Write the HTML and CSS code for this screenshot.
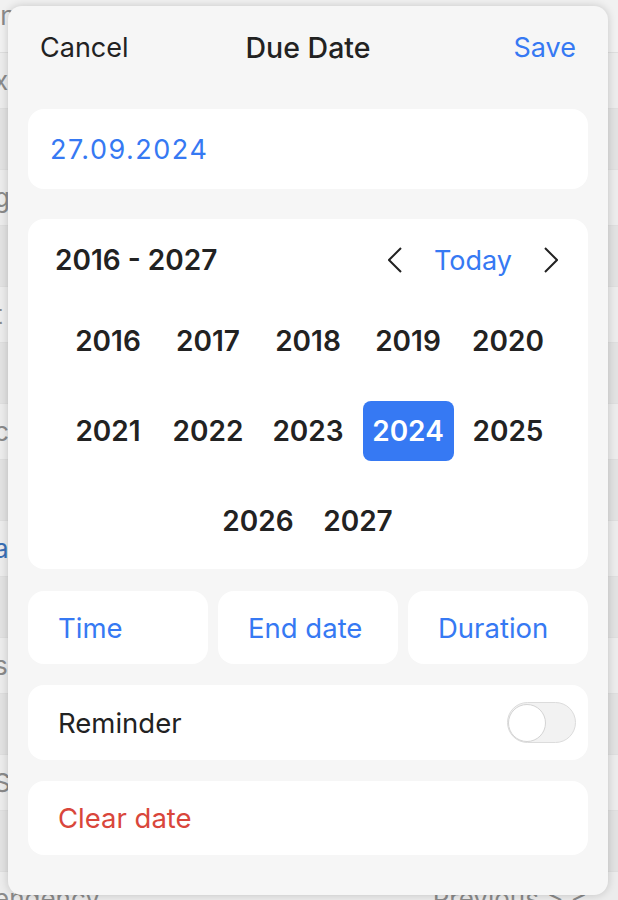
FILE: index.html
```html
<!DOCTYPE html>
<html>

<head>
    <title>Due Date</title>
    <meta charset="utf-8">
    <meta name="viewport" content="width=device-width">
    <link rel="stylesheet" href="styles.css">
</head>

<body>
    <!-- page behind the sheet -->
    <div id="backdrop">
        <div class="bg-row bg-top"><span>in</span></div>
        <div class="bg-row"><span>x</span></div>
        <div class="bg-row bg-dark"></div>
        <div class="bg-row"><span>g</span></div>
        <div class="bg-row bg-dark"></div>
        <div class="bg-row"><span>t</span></div>
        <div class="bg-row bg-dark"></div>
        <div class="bg-row"><span>c</span></div>
        <div class="bg-row bg-dark"></div>
        <div class="bg-row"><span class="bg-link">a</span></div>
        <div class="bg-row bg-dark"></div>
        <div class="bg-row"><span>s</span></div>
        <div class="bg-row bg-dark"></div>
        <div class="bg-row"><span>S</span></div>
        <div class="bg-row bg-dark"></div>
        <div class="bg-row bg-last"><span>endency</span><span>Previous &gt; &lt;</span></div>
    </div>

    <div id="sheet">
        <header>
            <div class="hdr-btn">Cancel</div>
            <div class="hdr-title">Due Date</div>
            <div class="hdr-btn hdr-right blue">Save</div>
        </header>

        <div class="card date-field">27.09.2024</div>

        <div class="card calendar">
            <div class="cal-head">
                <div class="cal-range">2016 - 2027</div>
                <div class="cal-nav">
                    <svg width="14" height="26" viewBox="0 0 14 26"><path d="M13 1 L1 13 L13 25" fill="none" stroke="#222" stroke-width="2"/></svg>
                    <span class="blue">Today</span>
                    <svg width="14" height="26" viewBox="0 0 14 26"><path d="M1 1 L13 13 L1 25" fill="none" stroke="#222" stroke-width="2"/></svg>
                </div>
            </div>
            <div class="years">
                <div class="year">2016</div>
                <div class="year">2017</div>
                <div class="year">2018</div>
                <div class="year">2019</div>
                <div class="year">2020</div>
                <div class="year">2021</div>
                <div class="year">2022</div>
                <div class="year">2023</div>
                <div class="year selected">2024</div>
                <div class="year">2025</div>
                <div class="year">2026</div>
                <div class="year">2027</div>
            </div>
        </div>

        <div class="options">
            <div class="card option blue">Time</div>
            <div class="card option blue">End date</div>
            <div class="card option blue">Duration</div>
        </div>

        <div class="card row reminder">
            <span>Reminder</span>
            <div class="toggle"><div class="knob"></div></div>
        </div>

        <div class="card row clear">Clear date</div>
    </div>
</body>

</html>
```

FILE: styles.css
```css
html, body {
    margin: 0px;
    width: 618px;
    height: 900px;
    overflow: hidden;
    font-family: Inter, "Noto Sans", sans-serif;
}

#backdrop {
    display: flex;
    flex-direction: column;
    height: 100%;
    background-color: #ececec;
    color: #8a8a8a;
    font-size: 26px;
}
.bg-row {
    height: 55px;
    display: flex;
    align-items: center;
    justify-content: space-between;
    border-bottom: 1px solid #dedede;
}
.bg-row span {
    margin-left: -6px;
}
.bg-top {
    height: 52px;
    align-items: flex-start;
    background-color: #f1f1f1;
}
.bg-dark {
    height: 60px;
    background-color: #e2e2e2;
}
.bg-link {
    color: #3a6fb5;
}
.bg-last {
    flex: 1;
    align-items: flex-end;
    border-bottom: none;
    margin-bottom: -14px;
}
.bg-last span:last-child {
    margin-right: 30px;
}

/* the sheet floats over the page */
#sheet {
    position: absolute;
    left: 8px;
    top: 6px;
    width: 560px;
    height: 889px;
    padding: 0px 20px;
    background-color: #f6f6f6;
    border-radius: 14px;
    box-shadow: 0 0 8px rgba(0, 0, 0, 0.18);
}

header {
    display: grid;
    grid-template-columns: 1fr auto 1fr;
    align-items: center;
    height: 82px;
    padding: 0px 12px;
    font-size: 27px;
    color: #222;
}
.hdr-title {
    font-size: 28.5px;
    font-weight: 500;
}
.hdr-right {
    text-align: right;
}
.blue {
    color: #3679f3;
}

.card {
    background-color: #fff;
    border-radius: 16px;
}

.date-field {
    margin-top: 21px;
    height: 80px;
    display: flex;
    align-items: center;
    padding-left: 22px;
    font-size: 27px;
    letter-spacing: 1.5px;
    color: #3679f3;
}

.calendar {
    margin-top: 30px;
    height: 350px;
    box-sizing: border-box;
    padding-top: 22px;
}
.cal-head {
    display: flex;
    justify-content: space-between;
    align-items: center;
    height: 38px;
    padding: 0px 30px 0px 27px;
}
.cal-range {
    font-size: 28px;
    font-weight: 600;
    color: #222;
}
.cal-nav {
    display: flex;
    align-items: center;
    gap: 32px;
    font-size: 27px;
}
.years {
    margin-top: 32px;
    display: flex;
    flex-wrap: wrap;
    justify-content: center;
    column-gap: 9px;
    row-gap: 30px;
    padding: 0px 10px;
}
.year {
    width: 91px;
    height: 60px;
    display: flex;
    align-items: center;
    justify-content: center;
    font-size: 28px;
    font-weight: 600;
    color: #222;
    border-radius: 8px;
}
.year.selected {
    background-color: #3679f3;
    color: #fff;
}

.options {
    margin-top: 22px;
    display: flex;
    gap: 10px;
}
.option {
    flex: 1;
    height: 73px;
    display: flex;
    align-items: center;
    padding-left: 30px;
    font-size: 27.5px;
}

.row {
    display: flex;
    align-items: center;
    justify-content: space-between;
    padding: 0px 12px 0px 30px;
    font-size: 27.5px;
    color: #222;
}
.reminder {
    margin-top: 21px;
    height: 75px;
}
.clear {
    margin-top: 21px;
    height: 74px;
    color: #d9463b;
}

.toggle {
    width: 67px;
    height: 39px;
    border: 1.5px solid #dcdcdc;
    border-radius: 21px;
    background-color: #f2f2f2;
    display: flex;
    align-items: center;
}
.knob {
    width: 38px;
    height: 38px;
    box-sizing: border-box;
    border-radius: 50%;
    background-color: #fff;
    border: 1.5px solid #d4d4d4;
}
```
